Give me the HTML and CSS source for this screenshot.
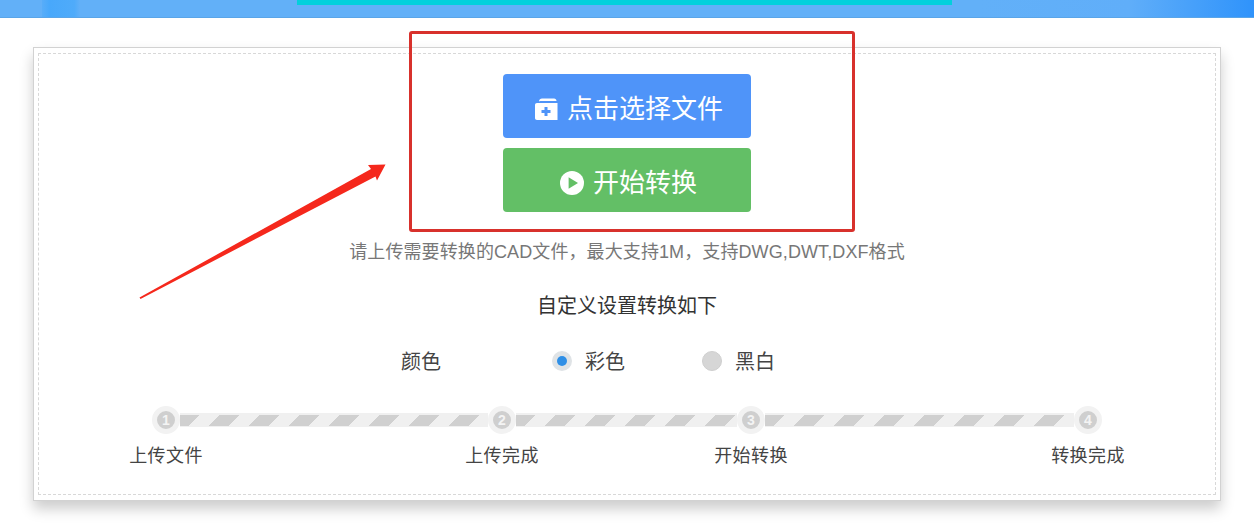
FILE: index.html
```html
<!DOCTYPE html>
<html lang="zh-CN">
<head>
<meta charset="UTF-8">
<title>CAD转换</title>
<link rel="stylesheet" href="styles.css">
</head>
<body>
    <div class="topbar">
        <div class="topbar-patch"></div>
        <div class="topbar-progress"></div>
    </div>

    <div class="card">
        <div class="card-inner">
            <button type="button" class="btn btn-blue">
                <svg class="btn-icon" viewBox="0 0 24 24">
                    <path fill="#fff" d="M5 4.5 C5 2.5 6.5 1.5 8 1.5 H20 C21.5 1.5 22.5 2.5 22.5 4 H7 C6 4 5.2 4.2 5 4.5 Z"/>
                    <path fill="#fff" d="M1 8 C1 6.8 1.8 6 3 6 H23.5 V23 H3 C1.8 23 1 22.2 1 21 Z"/>
                    <path fill="#4f94f9" d="M10.5 10 H13.5 V13 H16.5 V16 H13.5 V19 H10.5 V16 H7.5 V13 H10.5 Z"/>
                </svg>
                点击选择文件
            </button>
            <button type="button" class="btn btn-green">
                <svg class="btn-icon" viewBox="0 0 24 24">
                    <circle cx="12" cy="12" r="12" fill="#fff"/>
                    <path fill="#63bf66" d="M8.6 6.2 L18 12 L8.6 17.8 Z"/>
                </svg>
                开始转换
            </button>

            <p class="hint">请上传需要转换的CAD文件，最大支持1M，支持DWG,DWT,DXF格式</p>
            <h4 class="settings-title">自定义设置转换如下</h4>

            <div class="option-row">
                <span class="option-name">颜色</span>
                <span class="radio radio-on"></span>
                <span class="radio-label">彩色</span>
                <span class="radio"></span>
                <span class="radio-label">黑白</span>
            </div>

            <div class="steps">
                <span class="step-dot">1</span>
                <span class="step-bar"></span>
                <span class="step-dot">2</span>
                <span class="step-bar"></span>
                <span class="step-dot">3</span>
                <span class="step-bar"></span>
                <span class="step-dot">4</span>
                <span class="step-label">上传文件</span>
                <span class="step-label col-3">上传完成</span>
                <span class="step-label col-5">开始转换</span>
                <span class="step-label col-7">转换完成</span>
            </div>
        </div>
    </div>

    <!-- annotation drawn on top of the screenshot -->
    <div class="red-box"></div>
    <svg class="red-arrow" viewBox="0 0 1254 524">
        <path fill="#f5281c" d="M139.5 297.5 L371 169 L368 165 L385.5 164.5 L377 180.5 L375.5 176.5 L140.5 299 Z"/>
    </svg>
</body>
</html>
```

FILE: styles.css
```css
* {
    box-sizing: border-box;
}
body {
    margin: 0;
    height: 524px;
    overflow: hidden;
    position: relative;
    background-color: #fff;
    color: #333;
    font-family: "Noto Sans CJK SC", "Noto Sans", sans-serif;
}

.topbar {
    height: 18px;
    position: relative;
    display: flex;
    justify-content: center;
    background: linear-gradient(90deg, #62b0f8 0%, #62b0f8 78%, #60aef9 90%, #2f93fb 100%);
    border-bottom: 1px solid #5aa5e8;
}
.topbar-patch {
    position: absolute;
    left: 42px;
    top: 0;
    width: 38px;
    height: 17px;
    background: linear-gradient(90deg, #58adf9, #48a8fb 20%, #4fabfa 85%, #62b0f8);
}
.topbar-progress {
    width: 655px;
    height: 5px;
    margin-left: -5px;
    background-color: #02d0dc;
}

.card {
    width: 1188px;
    height: 454px;
    margin: 29px 0 0 33px;
    padding: 5px 4px;
    background-color: #fff;
    border: 1px solid #d2d2d2;
    box-shadow: 0 8px 13px rgba(0, 0, 0, 0.2);
}
.card-inner {
    height: 100%;
    padding-top: 20px;
    border: 1px dashed #d8d8d8;
    display: flex;
    flex-direction: column;
    align-items: center;
}

.btn {
    width: 248px;
    height: 64px;
    padding: 0 0 0 3px;
    border: none;
    border-radius: 4px;
    color: #fff;
    font-family: inherit;
    font-size: 26px;
    display: flex;
    justify-content: center;
    align-items: center;
    gap: 9px;
    cursor: pointer;
}
.btn-blue {
    background-color: #4f94f9;
}
.btn-green {
    margin-top: 10px;
    background-color: #63bf66;
}
.btn-icon {
    width: 24px;
    height: 24px;
    margin-top: 6px;
}

.hint {
    margin: 24px 0 0;
    color: #777;
    font-family: "Liberation Sans", "Noto Sans CJK SC", sans-serif;
    font-size: 18px;
    letter-spacing: 0.1px;
    line-height: 32px;
}
.settings-title {
    margin: 22px 0 0;
    color: #333;
    font-size: 20px;
    font-weight: 400;
    line-height: 30px;
}

.option-row {
    margin: 26px 78px 0 0;
    display: flex;
    align-items: center;
    font-size: 20px;
    line-height: 30px;
    color: #444;
}
.option-name {
    margin-right: 111px;
}
.radio {
    width: 20px;
    height: 20px;
    border-radius: 50%;
    background-color: #d6d6d6;
    border: 1px solid #cfcfcf;
}
.radio-on {
    background-color: #dfe6ec;
    border: 5px solid #dfe3e6;
    position: relative;
}
.radio-on::after {
    content: "";
    position: absolute;
    inset: 0;
    border-radius: 50%;
    background-color: #2f8fe6;
}
.radio-label {
    margin: 0 77px 0 13px;
}
.radio-label:last-child {
    margin-right: 0;
}

.steps {
    margin-top: 30px;
    display: grid;
    grid-template-columns: 28px 308px 28px 221px 28px 309px 28px;
    row-gap: 7px;
    align-items: center;
    justify-items: center;
}
.step-dot {
    width: 28px;
    height: 28px;
    border: 5px solid #f2f2f2;
    border-radius: 50%;
    background-color: #cfcfcf;
    color: #f4f4f4;
    font-family: "Liberation Sans", sans-serif;
    font-size: 14px;
    font-weight: 700;
    line-height: 18px;
    text-align: center;
}
.step-bar {
    width: 100%;
    height: 14px;
    background-color: #f0f0f0;
    background-image: repeating-linear-gradient(135deg, #d0d0d0 0, #d0d0d0 14.14px, #f0f0f0 14.14px, #f0f0f0 28.28px);
    background-size: 100% 11px;
    background-position: 0 2px;
    background-repeat: no-repeat;
}
.step-label {
    white-space: nowrap;
    font-size: 18px;
    letter-spacing: 0.4px;
    line-height: 26px;
    color: #444;
}
.col-3 {
    grid-column: 3;
}
.col-5 {
    grid-column: 5;
}
.col-7 {
    grid-column: 7;
}

.red-box {
    position: absolute;
    left: 409px;
    top: 31px;
    width: 446px;
    height: 201px;
    border: 3px solid #d8312c;
    border-radius: 3px;
}
.red-arrow {
    position: absolute;
    left: 0;
    top: 0;
    width: 1254px;
    height: 524px;
    pointer-events: none;
}
```
